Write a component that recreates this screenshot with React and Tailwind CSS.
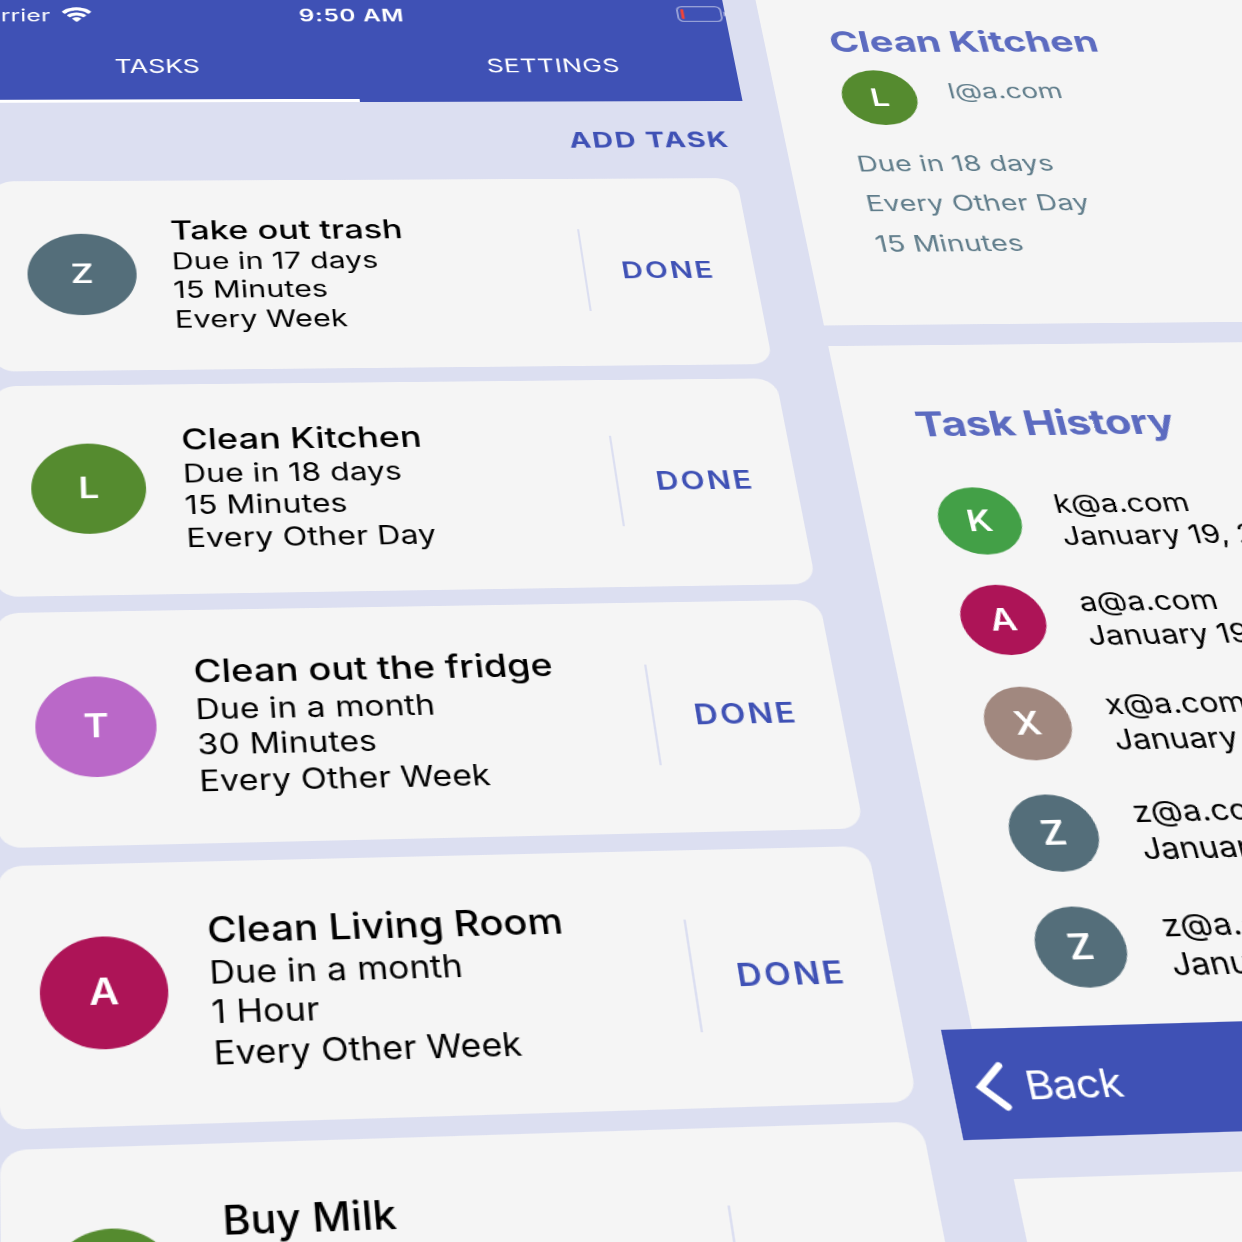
const tasks = [
  { initial: "Z", color: "bg-[#546e7a]", title: "Take out trash", lines: ["Due in 17 days", "15 Minutes", "Every Week"] },
  { initial: "L", color: "bg-[#558b2f]", title: "Clean Kitchen", lines: ["Due in 18 days", "15 Minutes", "Every Other Day"] },
  { initial: "T", color: "bg-[#ba68c8]", title: "Clean out the fridge", lines: ["Due in a month", "30 Minutes", "Every Other Week"] },
  { initial: "A", color: "bg-[#ad1457]", title: "Clean Living Room", lines: ["Due in a month", "1 Hour", "Every Other Week"] },
  { initial: "L", color: "bg-[#558b2f]", title: "Buy Milk", lines: [] },
];

const history = [
  { initial: "K", color: "bg-[#43a047]", email: "k@a.com" },
  { initial: "A", color: "bg-[#ad1457]", email: "a@a.com" },
  { initial: "X", color: "bg-[#a1887f]", email: "x@a.com" },
  { initial: "Z", color: "bg-[#546e7a]", email: "z@a.com" },
  { initial: "Z", color: "bg-[#546e7a]", email: "z@a.com" },
];

function WifiIcon() {
  return (
    <svg viewBox="0 0 15.3 11" className="ml-[5px] h-[11px] w-[15.3px] shrink-0" fill="#fff">
      <path d="M7.65 2.3c2.1 0 4.1.8 5.6 2.3.1.1.3.1.4 0l1.1-1.1c.1-.1.1-.3 0-.5C10.8-.9 4.5-.9.6 3c-.2.2-.2.4 0 .5l1.1 1.1c.1.1.3.1.4 0 1.5-1.5 3.5-2.3 5.55-2.3z" />
      <path d="M7.65 5.9c1.15 0 2.25.4 3.1 1.2.1.1.3.1.4 0l1.1-1.1c.1-.1.1-.3 0-.5-2.6-2.4-6.6-2.4-9.2 0-.1.2-.1.4 0 .5l1.1 1.1c.1.1.3.1.4 0 .85-.8 1.95-1.2 3.1-1.2z" />
      <path d="M9.8 8.3c.1-.1.1-.3 0-.4-1.25-1.05-3.05-1.05-4.3 0-.1.1-.1.3 0 .4l1.9 1.95c.1.1.4.1.5 0z" />
    </svg>
  );
}

function BatteryIcon() {
  return (
    <svg viewBox="0 0 25 11.5" className="h-[11.5px] w-[25px] shrink-0">
      <rect x=".5" y=".5" width="22" height="10.5" rx="2.7" fill="none" stroke="#fff" strokeOpacity=".45" />
      <rect x="2.2" y="2.2" width="1.5" height="7" rx=".5" fill="#f44336" />
      <path d="M23.7 4v3.6c.8-.3 1.2-1 1.2-1.8s-.4-1.5-1.2-1.8z" fill="#fff" fillOpacity=".5" />
    </svg>
  );
}

function TaskCard({ task }) {
  return (
    <div className="flex h-[116.5px] items-start rounded-[10px] bg-[#f5f5f5] pl-4">
      <div className={`mt-[33.6px] flex size-[50px] shrink-0 items-center justify-center rounded-full pt-[0.3px] text-base font-semibold text-white ${task.color}`}>
        {task.initial}
      </div>
      <div className="mt-[22.4px] ml-[16.5px] flex-1 whitespace-nowrap text-black">
        <div className="text-base leading-[19px] font-[550] tracking-[0.02px]">{task.title}</div>
        <div className="pt-[0.9px] text-sm leading-[17.8px] tracking-[0.05px]">
          {task.lines.map((line) => (
            <div key={line}>{line}</div>
          ))}
        </div>
      </div>
      <div className="mt-[32.7px] flex h-[51px] w-[81px] shrink-0 items-center border-l border-[#dcdff1] pt-[0.2px] pl-[17px] text-sm font-semibold tracking-[1.05px] text-[#3f51b5]">
        DONE
      </div>
    </div>
  );
}

function TaskListScreen() {
  return (
    <section className="w-[375px] shrink-0">
      <header className="h-[72.4px] w-[375.5px] bg-[#3f51b5] text-white">
        <div className="grid h-[22px] grid-cols-3 pt-[4.9px] text-xs leading-4">
          <div className="flex w-[59.7px] justify-end whitespace-nowrap">
            <span className="tracking-[0.1px]">Carrier</span>
            <div className="pt-[2.1px]"><WifiIcon /></div>
          </div>
          <div className="text-center font-semibold tracking-[0.35px]">9:50 AM</div>
          <div className="ml-auto w-[24.7px] pt-px"><BatteryIcon /></div>
        </div>
        <nav className="flex h-[50.4px] text-[13px] leading-5">
          <div className="w-[187.3px] border-b-2 border-white pt-[15.9px] pr-[6.4px] text-center tracking-[-0.05px]">TASKS</div>
          <div className="flex-1 pt-[15.9px] pl-[6.6px] text-center tracking-[0.2px]">SETTINGS</div>
        </nav>
      </header>
      <div className="h-[51.6px] pt-[16.1px] pr-[9.8px] text-right text-sm font-[650] tracking-[0.85px] text-[#3f51b5]">ADD TASK</div>
      <div className="flex flex-col gap-[8.5px] px-2.5">
        {tasks.map((task) => (
          <TaskCard key={task.title} task={task} />
        ))}
      </div>
    </section>
  );
}

function Avatar({ initial, color }) {
  return (
    <div className={`flex size-[37.5px] shrink-0 items-center justify-center rounded-full pt-[0.5px] text-base font-semibold text-white ${color}`}>
      {initial}
    </div>
  );
}

function TaskDetailScreen() {
  return (
    <section className="ml-[5px] w-[375px] shrink-0">
      <div className="ml-[12.6px] h-[217.4px] bg-[#f5f5f5] pt-[19.3px] pl-[32.9px] text-sm text-[#607d8b]">
        <h1 className="text-xl leading-6 font-bold text-[#5c6bc0]">Clean Kitchen</h1>
        <div className="mt-[8.3px] flex">
          <Avatar initial="L" color="bg-[#558b2f]" />
          <div className="pt-[5.5px] pl-[16.4px] leading-[18px]">l@a.com</div>
        </div>
        <div className="mt-[13px] leading-[26px] tracking-[0.07px]">
          <div>Due in 18 days</div>
          <div>Every Other Day</div>
          <div>15 Minutes</div>
        </div>
      </div>
      <div className="mt-[12.6px] ml-[12.6px] h-[354.3px] bg-[#f5f5f5] pt-[34.8px] pl-[32.7px] text-sm text-black">
        <h2 className="text-xl leading-6 font-bold tracking-[-0.24px] text-[#5c6bc0]">Task History</h2>
        <div className="mt-[24.7px] flex flex-col gap-[16.6px]">
          {history.map((entry, index) => (
            <div key={index} className="flex h-[37.5px]">
              <Avatar initial={entry.initial} color={entry.color} />
              <div className="pt-[0.9px] pl-[16.9px] leading-[18px] whitespace-nowrap">
                <div>{entry.email}</div>
                <div>January 19, 2019</div>
              </div>
            </div>
          ))}
        </div>
      </div>
      <div className="flex h-[48.2px] items-center bg-[#3f51b5] pt-[3px] pl-[9px] text-[17px] text-white">
        <svg viewBox="0 0 13 22" className="h-[22px] w-[13px]" fill="none" stroke="#fff" strokeWidth="3" strokeLinecap="round">
          <path d="M11 2 2.2 11 11.3 20" />
        </svg>
        <span className="pl-[7.1px] tracking-[-0.3px]">Back</span>
      </div>
      <div className="mt-[17px] ml-[16.7px] h-[100px] bg-[#f5f5f5]" />
    </section>
  );
}

export default function App() {
  return (
    <main className="h-[1242px] w-full overflow-hidden bg-[#dcdff1] font-['Inter',sans-serif]">
      <div className="w-[1600px] origin-top-left [transform:matrix3d(2.1417,0.001341,0,0.00005935,0.016657,1.48695,0,-0.0003919,0,0,1,0,-8.3,181.4,0,1)_translate(-10px,-124px)_scale(0.5)]">
        <div className="flex items-start [zoom:2]">
          <TaskListScreen />
          <TaskDetailScreen />
        </div>
      </div>
    </main>
  );
}
